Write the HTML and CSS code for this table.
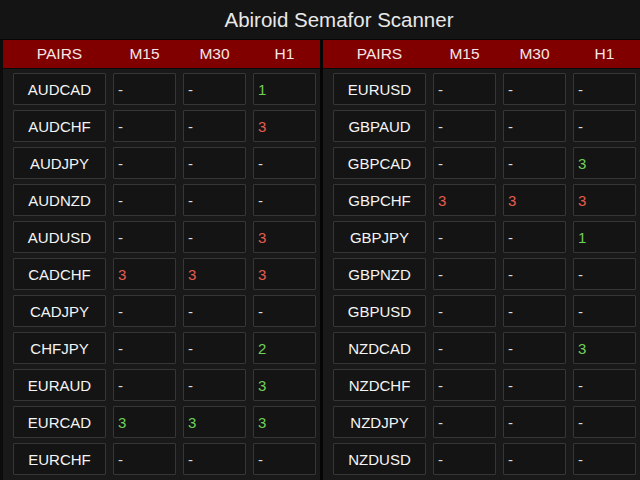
FILE: index.html
```html
<!DOCTYPE html>
<html>
<head>
<meta charset="utf-8">
<link rel="stylesheet" href="styles.css">
</head>
<body>
<div class="app">
  <div class="title">Abiroid Semafor Scanner</div>
  <div class="panels">
    <div class="panel">
      <div class="head"><span>PAIRS</span><span>M15</span><span>M30</span><span>H1</span></div>
      <div class="rows">
        <div class="pair">AUDCAD</div><div class="v">-</div><div class="v">-</div><div class="v g">1</div>
        <div class="pair">AUDCHF</div><div class="v">-</div><div class="v">-</div><div class="v r">3</div>
        <div class="pair">AUDJPY</div><div class="v">-</div><div class="v">-</div><div class="v">-</div>
        <div class="pair">AUDNZD</div><div class="v">-</div><div class="v">-</div><div class="v">-</div>
        <div class="pair">AUDUSD</div><div class="v">-</div><div class="v">-</div><div class="v r">3</div>
        <div class="pair">CADCHF</div><div class="v r">3</div><div class="v r">3</div><div class="v r">3</div>
        <div class="pair">CADJPY</div><div class="v">-</div><div class="v">-</div><div class="v">-</div>
        <div class="pair">CHFJPY</div><div class="v">-</div><div class="v">-</div><div class="v g">2</div>
        <div class="pair">EURAUD</div><div class="v">-</div><div class="v">-</div><div class="v g">3</div>
        <div class="pair">EURCAD</div><div class="v g">3</div><div class="v g">3</div><div class="v g">3</div>
        <div class="pair">EURCHF</div><div class="v">-</div><div class="v">-</div><div class="v">-</div>
      </div>
    </div>
    <div class="panel">
      <div class="head"><span>PAIRS</span><span>M15</span><span>M30</span><span>H1</span></div>
      <div class="rows">
        <div class="pair">EURUSD</div><div class="v">-</div><div class="v">-</div><div class="v">-</div>
        <div class="pair">GBPAUD</div><div class="v">-</div><div class="v">-</div><div class="v">-</div>
        <div class="pair">GBPCAD</div><div class="v">-</div><div class="v">-</div><div class="v g">3</div>
        <div class="pair">GBPCHF</div><div class="v r">3</div><div class="v r">3</div><div class="v r">3</div>
        <div class="pair">GBPJPY</div><div class="v">-</div><div class="v">-</div><div class="v g">1</div>
        <div class="pair">GBPNZD</div><div class="v">-</div><div class="v">-</div><div class="v">-</div>
        <div class="pair">GBPUSD</div><div class="v">-</div><div class="v">-</div><div class="v">-</div>
        <div class="pair">NZDCAD</div><div class="v">-</div><div class="v">-</div><div class="v g">3</div>
        <div class="pair">NZDCHF</div><div class="v">-</div><div class="v">-</div><div class="v">-</div>
        <div class="pair">NZDJPY</div><div class="v">-</div><div class="v">-</div><div class="v">-</div>
        <div class="pair">NZDUSD</div><div class="v">-</div><div class="v">-</div><div class="v">-</div>
      </div>
    </div>
  </div>
</div>
</body>
</html>
```
FILE: styles.css
```css
html, body {
  margin: 0;
  padding: 0;
  background: #161616;
}
.app {
  width: 640px;
  height: 480px;
  overflow: hidden;
  background: #191919;
  font-family: "Liberation Sans", Arial, sans-serif;
  color: #ececec;
}
.title {
  height: 39px;
  line-height: 40px;
  background: #141414;
  border-bottom: 1px solid #070707;
  font-size: 20.5px;
  text-align: center;
  padding-left: 38px;
  color: #e8e8e8;
}
.panels {
  display: flex;
}
.panel {
  width: 317px;
  border-left: 3px solid #0c0c0c;
  height: 440px;
}
.panel + .panel {
  border-left-color: #050505;
}
.head {
  height: 28px;
  background: #800000;
  display: grid;
  grid-template-columns: 93px 63px 63px 63px;
  column-gap: 7px;
  padding-left: 10px;
  align-items: center;
  font-size: 15.5px;
  color: #f5e6e6;
  border-bottom: 1px solid #0a0a0a;
}
.head span {
  text-align: center;
}
.rows {
  display: grid;
  grid-template-columns: 93px 63px 63px 63px;
  grid-auto-rows: 32px;
  column-gap: 7px;
  row-gap: 5px;
  padding: 4px 0 0 10px;
  font-size: 15px;
}
.pair, .v {
  box-sizing: border-box;
  border: 1px solid #363636;
  border-radius: 1px;
  background: #141414;
  display: flex;
  align-items: center;
}
.pair {
  justify-content: center;
  color: #f5f5f5;
}
.v {
  padding-left: 4px;
  color: #dcdcdc;
}
.v.g { color: #70d058; }
.v.r { color: #e65c4e; }
```
